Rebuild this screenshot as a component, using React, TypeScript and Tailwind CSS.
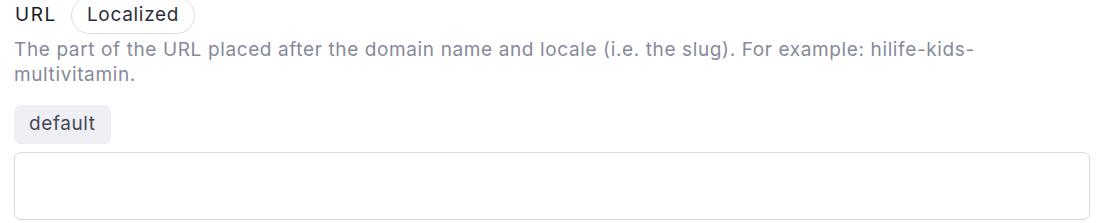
import React from "react";

export default function App() {
  return (
    <div className="w-[1100px] h-[223px] bg-white overflow-hidden font-['Inter',sans-serif]">
      <div className="pl-[14px] pr-[10px] -mt-[4px]">
        <div className="flex items-center gap-[14px] h-[38px]">
          <span className="pl-px text-[19px] tracking-[1.6px] text-[#1a1b23]">URL</span>
          <span className="h-[37px] px-[15px] flex items-center rounded-full border border-[#dcdde3] text-[19px] tracking-[0.7px] text-[#2c2e3c]">
            Localized
          </span>
        </div>
        <p className="mt-[3px] max-w-[985px] text-[19px] tracking-[0.62px] leading-[25px] text-[#868a99]">
          The part of the URL placed after the domain name and locale (i.e. the slug). For example: hilife-kids-multivitamin.
        </p>
        <div className="mt-[18px] inline-flex items-center h-[39px] px-[15px] rounded-[7px] bg-[#eef0f6] text-[19px] tracking-[0.6px] text-[#454857]">
          default
        </div>
        <div className="mt-[8px] w-[1076px] h-[68px] rounded-[7px] border border-[#d6d7dc] bg-white" />
      </div>
    </div>
  );
}
